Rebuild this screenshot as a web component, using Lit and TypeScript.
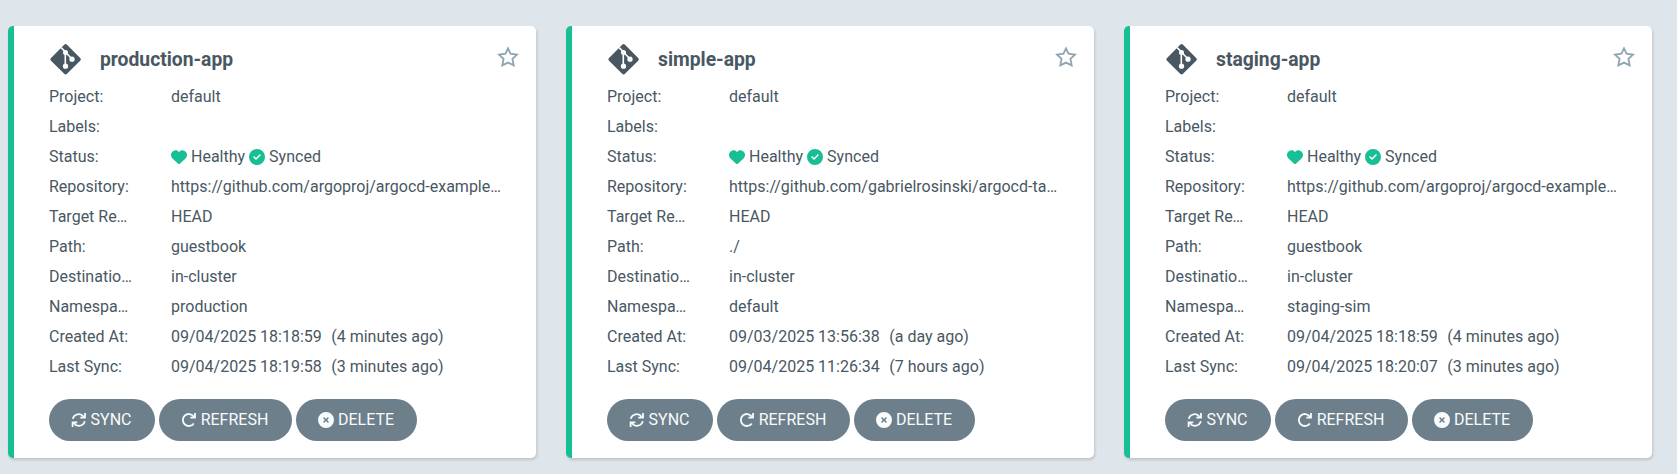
import { LitElement, html, css, svg } from "lit";
import { customElement, property } from "lit/decorators.js";

interface App {
  name: string;
  project: string;
  repository: string;
  path: string;
  namespace: string;
  created: string;
  createdAgo: string;
  synced: string;
  syncedAgo: string;
}

const apps: App[] = [
  { name: "production-app", project: "default", repository: "https://github.com/argoproj/argocd-example-apps.git", path: "guestbook", namespace: "production", created: "09/04/2025 18:18:59", createdAgo: "(4 minutes ago)", synced: "09/04/2025 18:19:58", syncedAgo: "(3 minutes ago)" },
  { name: "simple-app", project: "default", repository: "https://github.com/gabrielrosinski/argocd-tasks.git", path: "./", namespace: "default", created: "09/03/2025 13:56:38", createdAgo: "(a day ago)", synced: "09/04/2025 11:26:34", syncedAgo: "(7 hours ago)" },
  { name: "staging-app", project: "default", repository: "https://github.com/argoproj/argocd-example-apps.git", path: "guestbook", namespace: "staging-sim", created: "09/04/2025 18:18:59", createdAgo: "(4 minutes ago)", synced: "09/04/2025 18:20:07", syncedAgo: "(3 minutes ago)" },
];

const glyph = (name: string, box: string, body: unknown) =>
  html`<svg class="icon ${name}" viewBox=${box} aria-hidden="true">${body}</svg>`;

const gitIcon = glyph("git", "0 0 32 32", svg`
  <rect x="5.3" y="5" width="22.6" height="22.6" rx="2" transform="rotate(45 16.6 16.3)" fill="currentColor"/>
  <path d="M12.1 4.6 L16.3 8.8 V23 M16.3 9 L23 16" fill="none" stroke="#fff" stroke-width="1.6"/>
  <circle cx="16.5" cy="9.4" r="2.5" fill="#fff"/><circle cx="23" cy="16.2" r="2.6" fill="#fff"/><circle cx="16.5" cy="23.2" r="2.6" fill="#fff"/>`);
const starIcon = glyph("star", "0 0 22 22", svg`
  <path d="M11 2.3 L13.5 7.7 L20 8.6 L15.4 12.9 L16.7 19.3 L11 16.6 L5.3 19.3 L6.6 12.9 L2 8.6 L8.5 7.7 Z" fill="none" stroke="currentColor" stroke-width="1.8"/>`);
const heartIcon = glyph("heart", "0 0 512 512", svg`
  <path fill="currentColor" d="M47.6 300.4L228.3 469.1c7.5 7 17.4 10.9 27.7 10.9s20.2-3.9 27.7-10.9L464.4 300.4c30.4-28.3 47.6-68 47.6-109.5v-5.8c0-69.9-50.5-129.5-119.4-141C347 36.5 300.6 51.4 268 84L256 96 244 84c-32.6-32.6-79-47.5-124.6-39.9C50.5 55.6 0 115.2 0 185.1v5.8c0 41.5 17.2 81.2 47.6 109.5z"/>`);
const checkIcon = glyph("check", "0 0 512 512", svg`
  <path fill="currentColor" d="M256 512A256 256 0 1 0 256 0a256 256 0 1 0 0 512zM369 209L241 337c-9.4 9.4-24.6 9.4-33.9 0l-64-64c-9.4-9.4-9.4-24.6 0-33.9s24.6-9.4 33.9 0l47 47L335 175c9.4-9.4 24.6-9.4 33.9 0s9.4 24.6 0 33.9z"/>`);
const deleteIcon = glyph("delete", "0 0 512 512", svg`
  <path fill="currentColor" d="M256 512A256 256 0 1 0 256 0a256 256 0 1 0 0 512zM175 175c9.4-9.4 24.6-9.4 33.9 0l47 47 47-47c9.4-9.4 24.6-9.4 33.9 0s9.4 24.6 0 33.9l-47 47 47 47c9.4 9.4 9.4 24.6 0 33.9s-24.6 9.4-33.9 0l-47-47-47 47c-9.4 9.4-24.6 9.4-33.9 0s-9.4-24.6 0-33.9l47-47-47-47c-9.4-9.4-9.4-24.6 0-33.9z"/>`);
const syncIcon = glyph("sync", "0 0 16 16", svg`
  <path d="M1.8 6.9 A6 6 0 0 1 12.6 4.8 M14 1 V5.7 H9.3 M13.8 9.1 A6 6 0 0 1 3 11.2 M1.6 15 V10.3 H6.3" fill="none" stroke="currentColor" stroke-width="1.8"/>`);
const refreshIcon = glyph("refresh", "0 0 16 16", svg`
  <path d="M12.8 4.6 A6 6 0 1 0 12.8 11.4 M14 1 V5.7 H9.3" fill="none" stroke="currentColor" stroke-width="1.8"/>`);

@customElement("app-tile")
export class AppTile extends LitElement {
  @property({ attribute: false }) app!: App;

  static styles = css`
    :host { display: block; }
    .card {
      box-sizing: border-box;
      height: 432px;
      padding: 17px 16px 0 35px;
      border-left: 6px solid #18be94;
      border-radius: 5px;
      background: #fff;
      box-shadow: 1px 2px 3px rgba(0, 0, 0, 0.14);
    }
    .icon { display: inline-block; width: 16px; height: 16px; flex: none; }
    .head { display: flex; align-items: flex-start; height: 34px; }
    .git { width: 32px; height: 32px; }
    .title { flex: 1; margin: 0 0 0 19px; font-size: 19.3px; font-weight: 700; line-height: 34px; }
    .star { width: 22px; height: 22px; margin: 3px 1px 0 0; color: #8fa4b1; }
    .row { display: grid; grid-template-columns: 84px 331px; column-gap: 38px; height: 30px; line-height: 30px; }
    .rows { margin-top: 5px; }
    .cell { overflow: hidden; white-space: pre; text-overflow: ellipsis; }
    .status { display: flex; align-items: center; gap: 4px; }
    .heart, .check { color: #18be94; }
    .ago { margin-left: 1.5px; }
    .actions { display: flex; gap: 4px; margin-top: 17px; }
    .button {
      display: flex; align-items: center; justify-content: center; gap: 4px;
      box-sizing: border-box; height: 42px; padding: 0 2px 0 0; border: 0; border-radius: 21px;
      background: #6d7f8b; color: #f8fbfb; font: inherit; line-height: 42px;
    }
    .wide-sync { width: 106px; }
    .wide-refresh { width: 133px; }
    .wide-delete { width: 121px; padding-right: 1px; }
  `;

  private row(label: string, value: unknown) {
    return html`<div class="row"><div class="cell">${label}</div><div class="cell">${value}</div></div>`;
  }

  private time(at: string, ago: string) {
    return html`${at}  <span class="ago">${ago}</span>`;
  }

  render() {
    const a = this.app;
    return html`<article class="card">
      <header class="head">${gitIcon}<h2 class="title">${a.name}</h2>${starIcon}</header>
      <div class="rows">
        ${this.row("Project:", a.project)}
        ${this.row("Labels:", "")}
        ${this.row("Status:", html`<div class="status">${heartIcon}<span>Healthy</span>${checkIcon}<span>Synced</span></div>`)}
        ${this.row("Repository:", a.repository)}
        ${this.row("Target Revision:", "HEAD")}
        ${this.row("Path:", a.path)}
        ${this.row("Destination:", "in-cluster")}
        ${this.row("Namespace:", a.namespace)}
        ${this.row("Created At:", this.time(a.created, a.createdAgo))}
        ${this.row("Last Sync:", this.time(a.synced, a.syncedAgo))}
      </div>
      <div class="actions">
        <button class="button wide-sync">${syncIcon}<span>SYNC</span></button>
        <button class="button wide-refresh">${refreshIcon}<span>REFRESH</span></button>
        <button class="button wide-delete">${deleteIcon}<span>DELETE</span></button>
      </div>
    </article>`;
  }
}

@customElement("app-root")
export class AppRoot extends LitElement {
  static styles = css`
    :host {
      display: block; box-sizing: border-box; height: 474px; overflow: hidden;
      background: #dee5eb; color: #495763;
      font: 16px Roboto, "Liberation Sans", sans-serif;
    }
    .tiles { display: grid; grid-template-columns: repeat(3, 528px); column-gap: 30px; padding: 26px 0 0 8px; }
  `;

  render() {
    return html`<main class="tiles">${apps.map((a) => html`<app-tile .app=${a}></app-tile>`)}</main>`;
  }
}
